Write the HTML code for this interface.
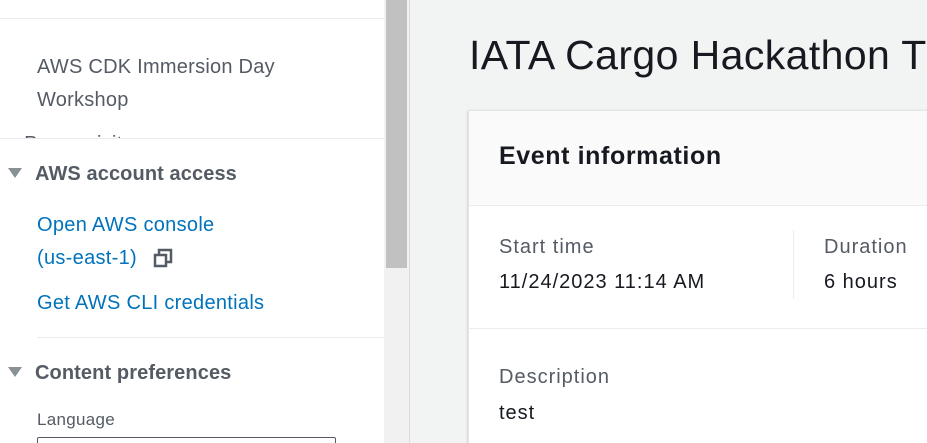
<!DOCTYPE html>
<html><head><meta charset="utf-8"><style>
*{margin:0;padding:0;box-sizing:border-box}
html,body{width:927px;height:443px;overflow:hidden}
body{background:#f2f3f3;font-family:"Liberation Sans",sans-serif;position:relative}
.a{position:absolute;white-space:nowrap}
#side{position:absolute;left:0;top:0;width:384px;height:443px;background:#fff;overflow:hidden}
.hr{position:absolute;height:1px;background:#e9ebed}
.s{font-size:20px;color:#545b64;letter-spacing:0.25px}
.l{font-size:20px;color:#0073bb;letter-spacing:0.3px}
.h{font-size:20px;font-weight:bold;color:#545b64;letter-spacing:0.1px}
.c{font-size:20px;letter-spacing:1px}
.tri{position:absolute;width:0;height:0;border-left:7px solid transparent;border-right:7px solid transparent;border-top:10px solid #879196}
</style></head><body>
<div id="side">
<div class="hr" style="left:0;top:18px;width:384px"></div>
<div class="a s" style="left:37px;top:56px">AWS CDK Immersion Day</div>
<div class="a s" style="left:37px;top:89px">Workshop</div>
<div class="a s" style="left:8px;top:131px;height:7px;overflow:hidden">▸ Prerequisites</div>
<div class="hr" style="left:0;top:138px;width:384px"></div>
<div class="tri" style="left:8px;top:168px"></div>
<div class="a h" style="left:35px;top:163px">AWS account access</div>
<div class="a l" style="left:37px;top:214px">Open AWS console</div>
<div class="a l" style="left:37px;top:247px">(us-east-1)</div>
<svg class="a" style="left:152px;top:247px" width="22" height="22" viewBox="0 0 22 22"><rect x="7" y="3" width="12" height="12" fill="none" stroke="#545b64" stroke-width="2.5"/><rect x="3" y="8" width="11" height="11" fill="#fff" stroke="#545b64" stroke-width="2.5"/></svg>
<div class="a l" style="left:37px;top:292px">Get AWS CLI credentials</div>
<div class="hr" style="left:37px;top:337px;width:347px"></div>
<div class="tri" style="left:8px;top:367px"></div>
<div class="a h" style="left:35px;top:362px">Content preferences</div>
<div class="a" style="left:37px;top:410px;font-size:17px;color:#545b64;letter-spacing:0.3px">Language</div>
<div class="a" style="left:37px;top:437px;width:299px;height:20px;border:1px solid #545b64;border-radius:2px"></div>
</div>
<div class="a" style="left:384px;top:0;width:25px;height:443px;background:#f1f1f1"></div>
<div class="a" style="left:386px;top:0;width:21px;height:268px;background:#c1c1c1"></div>
<div class="a" style="left:409px;top:0;width:1px;height:443px;background:#dcdcdc"></div>
<div class="a" style="left:469px;top:32px;font-size:41px;color:#16191f;letter-spacing:0.4px">IATA Cargo Hackathon T</div>
<div class="a" style="left:468px;top:110px;width:470px;height:340px;background:#fff;border:1px solid #e4e6e8;box-shadow:0 1px 2px rgba(0,28,36,.3)">
<div style="height:95px;background:#fafafa;border-bottom:1px solid #eaeded"></div>
</div>
<div class="a" style="left:499px;top:142px;font-size:25px;font-weight:bold;color:#16191f;letter-spacing:0.6px">Event information</div>
<div class="a c" style="left:499px;top:236px;color:#545b64">Start time</div>
<div class="a c" style="left:499px;top:271px;color:#16191f">11/24/2023 11:14 AM</div>
<div class="a" style="left:793px;top:230px;width:1px;height:69px;background:#eaeded"></div>
<div class="a c" style="left:824px;top:236px;color:#545b64">Duration</div>
<div class="a c" style="left:824px;top:271px;color:#16191f">6 hours</div>
<div class="a" style="left:469px;top:328px;width:460px;height:1px;background:#eaeded"></div>
<div class="a c" style="left:499px;top:366px;color:#545b64">Description</div>
<div class="a c" style="left:499px;top:402px;color:#16191f">test</div>
</body></html>
